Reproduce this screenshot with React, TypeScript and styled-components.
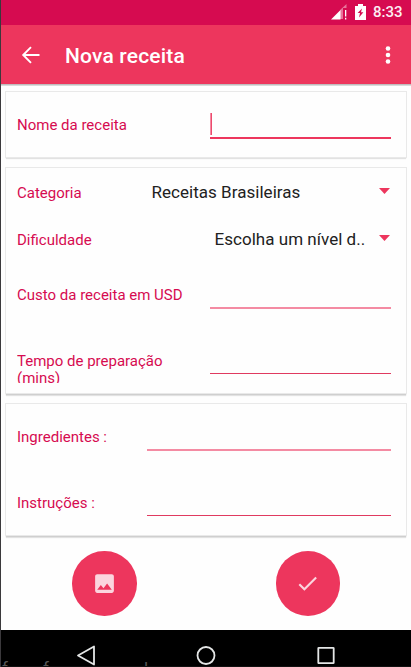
import React from 'react';
import styled, { createGlobalStyle } from 'styled-components';

const Global = createGlobalStyle`
  html, body { margin: 0; padding: 0; background: #fefefe; }
  body { width: 411px; height: 667px; overflow: hidden; }
  * { box-sizing: border-box; }
`;

const Screen = styled.div`
  display: flex;
  flex-direction: column;
  width: 411px;
  height: 667px;
  overflow: hidden;
  border-left: 1px solid #3b393c;
  background: #fefefe;
  font-family: Roboto, sans-serif;
`;

const StatusBar = styled.header`
  display: flex;
  align-items: center;
  justify-content: flex-end;
  flex: none;
  height: 25px;
  padding-right: 9px;
  background: #d60b50;
  color: #fdeef3;
`;

const Clock = styled.span`
  margin: -1px 0 0 7px;
  width: 29px;
  font-size: 15px;
  font-weight: 500;
  line-height: 24px;
  white-space: nowrap;
`;

const StatusIcon = styled.svg`
  margin: -2px 0 0 8px;
`;

const AppBar = styled.div`
  display: flex;
  align-items: center;
  flex: none;
  height: 59px;
  padding: 0 15.5px 0 18px;
  background: #ed365d;
  box-shadow: 0 1px 0 #bfbdbe, 0 2px 0 #dadada;
  color: #fff;
`;

const Title = styled.h1`
  flex: 1;
  margin: 2px 0 0 22px;
  font-size: 21px;
  font-weight: 500;
  line-height: 28px;
  letter-spacing: 0.18px;
`;

const Form = styled.main`
  display: flex;
  flex-direction: column;
  gap: 11px;
  flex: none;
  padding: 8px 5px 0 5px;
`;

const Card = styled.section<{ $depth: number }>`
  padding: 0 15px 0 11px;
  background: #fefefe;
  box-shadow: 0 0 0 1px #e9e9e9, 0 ${(p) => p.$depth}px 1px 0 #cfcfcf, 0 ${(p) => p.$depth + 1}px 1px 0 #e6e6e6;
`;

const Row = styled.div<{ $height: number; $column: number; $top: number }>`
  display: grid;
  grid-template-columns: ${(p) => p.$column}px 1fr;
  height: ${(p) => p.$height}px;
  padding-top: ${(p) => p.$top}px;
`;

const Label = styled.label<{ $clip?: number; $offset?: number }>`
  height: ${(p) => (p.$clip ? `${p.$clip}px` : 'auto')};
  margin-top: ${(p) => p.$offset ?? 0}px;
  overflow: hidden;
  padding-right: 10px;
  color: #d60b50;
  font-size: 15px;
  line-height: ${(p) => (p.$clip ? 17 : 18)}px;
`;

const Field = styled.div<{ $height: number; $line: 'focus' | 'soft' | 'thin' }>`
  height: ${(p) => p.$height}px;
  border-bottom: ${(p) =>
    p.$line === 'focus' ? '2px solid #ed365d' : p.$line === 'soft' ? '2px solid #f48ba3' : '1px solid #e03a60'};
`;

const Caret = styled.div`
  width: 2px;
  height: 22px;
  background: linear-gradient(90deg, #f48ba3 50%, #ed4a6d 50%);
`;

const Spinner = styled.div`
  display: flex;
  justify-content: space-between;
  height: 22px;
  margin: -1px 0 0 -0.5px;
  color: #212121;
  font-size: 17px;
  line-height: 18px;
  letter-spacing: 0.03px;
  white-space: nowrap;
`;

const Arrow = styled.svg`
  margin: 5px 1px 0 0;
`;

const Actions = styled.div`
  display: flex;
  justify-content: space-between;
  flex: none;
  height: 95px;
  padding: 16px 71px 0 71px;
`;

const RoundButton = styled.button`
  display: flex;
  align-items: center;
  justify-content: center;
  width: 64.5px;
  height: 64.5px;
  padding: 0;
  border: 0;
  border-radius: 50%;
  background: #ed365d;
`;

const NavBar = styled.nav`
  position: relative;
  display: flex;
  justify-content: space-between;
  flex: 1;
  padding: 15px 76.5px 0 75px;
  background: #000;
  border-bottom: 1px solid #111;
  overflow: hidden;
`;

const Behind = styled.span<{ $left: number }>`
  position: absolute;
  left: ${(p) => p.$left}px;
  top: 28px;
  color: #555;
  font-size: 17px;
  line-height: 20px;
`;

const DropArrow = () => (
  <Arrow width="11" height="6" viewBox="0 0 11 6">
    <path d="M0 0H11L5.5 6Z" fill="#ed365d" />
  </Arrow>
);

export default function App() {
  return (
    <>
      <Global />
      <Screen>
        <StatusBar>
          <StatusIcon width="16" height="16" viewBox="0 0 16 16">
            <path d="M9 6L15.5 0V4H12V15H9Z" fill="#e8739a" />
            <path d="M0 15.500L9.500 6V15.500Z" fill="#fff" />
            <path d="M14 6h1.300v6.500H14zM14 13.800h1.300v1.700H14z" fill="#fff" />
          </StatusIcon>
          <StatusIcon width="11" height="16" viewBox="0 0 11 16">
            <path d="M3 0h5v2h3v14H0V2h3Z" fill="#fff" />
            <path d="M7 4.500L2.600 9H5L4 13.500L8.400 8.200H6Z" fill="#d60b50" />
          </StatusIcon>
          <Clock>8:33</Clock>
        </StatusBar>
        <AppBar>
          <svg width="24" height="24" viewBox="0 0 24 24">
            <path d="M20.500 12H4.500M12 4.200L4.200 12L12 19.800" fill="none" stroke="#fff" strokeWidth="1.900" />
          </svg>
          <Title>Nova receita</Title>
          <svg width="16" height="24" viewBox="0 0 16 24">
            <circle cx="8" cy="5.500" r="2.300" fill="#fff" />
            <circle cx="8" cy="12" r="2.300" fill="#fff" />
            <circle cx="8" cy="18.500" r="2.300" fill="#fff" />
          </svg>
        </AppBar>
        <Form>
          <Card $depth={1}>
            <Row $height={65} $column={193} $top={21}>
              <Label $offset={3}>Nome da receita</Label>
              <Field $height={26} $line="focus"><Caret /></Field>
            </Row>
          </Card>
          <Card $depth={2}>
            <Row $height={48} $column={135} $top={16}>
              <Label>Categoria</Label>
              <Spinner>Receitas Brasileiras<DropArrow /></Spinner>
            </Row>
            <Row $height={47} $column={198} $top={15}>
              <Label>Dificuldade</Label>
              <Spinner>Escolha um nível d..<DropArrow /></Spinner>
            </Row>
            <Row $height={65} $column={193} $top={24}>
              <Label $offset={-1}>Custo da receita em USD</Label>
              <Field $height={22} $line="soft" />
            </Row>
            <Row $height={65} $column={193} $top={24}>
              <Label $clip={30} $offset={1}>Tempo de preparação<br />(mins)</Label>
              <Field $height={22} $line="thin" />
            </Row>
          </Card>
          <Card $depth={2}>
            <Row $height={66} $column={130} $top={25}>
              <Label $offset={-1}>Ingredientes :</Label>
              <Field $height={22} $line="soft" />
            </Row>
            <Row $height={65} $column={130} $top={24}>
              <Label>Instruções :</Label>
              <Field $height={22} $line="thin" />
            </Row>
          </Card>
        </Form>
        <Actions>
          <RoundButton aria-label="Imagem">
            <svg width="25" height="25" viewBox="0 0 24 24">
              <path
                d="M21 19V5c0-1.100-.9-2-2-2H5c-1.100 0-2 .9-2 2v14c0 1.100.9 2 2 2h14c1.100 0 2-.9 2-2zM8.500 13.500l2.500 3.010L14.500 12l4.500 6H5l3.500-4.500z"
                fill="#fbd5de"
              />
            </svg>
          </RoundButton>
          <RoundButton aria-label="Confirmar">
            <svg width="25" height="25" viewBox="0 0 24 24">
              <path d="M9 16.170L4.830 12l-1.420 1.410L9 19 21 7l-1.410-1.410z" fill="#fbd5de" />
            </svg>
          </RoundButton>
        </Actions>
        <NavBar>
          <Behind $left={1}>f</Behind>
          <Behind $left={42}>f</Behind>
          <Behind $left={143}>l</Behind>
          <svg width="20" height="21" viewBox="0 0 20 21">
            <path d="M18 1.500V19.500L2 10.500Z" fill="none" stroke="#e4e6e6" strokeWidth="1.800" strokeLinejoin="round" />
          </svg>
          <svg width="20" height="21" viewBox="0 0 20 21">
            <circle cx="10" cy="10.500" r="8.500" fill="none" stroke="#e4e6e6" strokeWidth="1.800" />
          </svg>
          <svg width="18" height="21" viewBox="0 0 18 21">
            <rect x="1.300" y="2.800" width="15.400" height="15.400" rx="0.5" fill="none" stroke="#e4e6e6" strokeWidth="1.800" />
          </svg>
        </NavBar>
      </Screen>
    </>
  );
}
